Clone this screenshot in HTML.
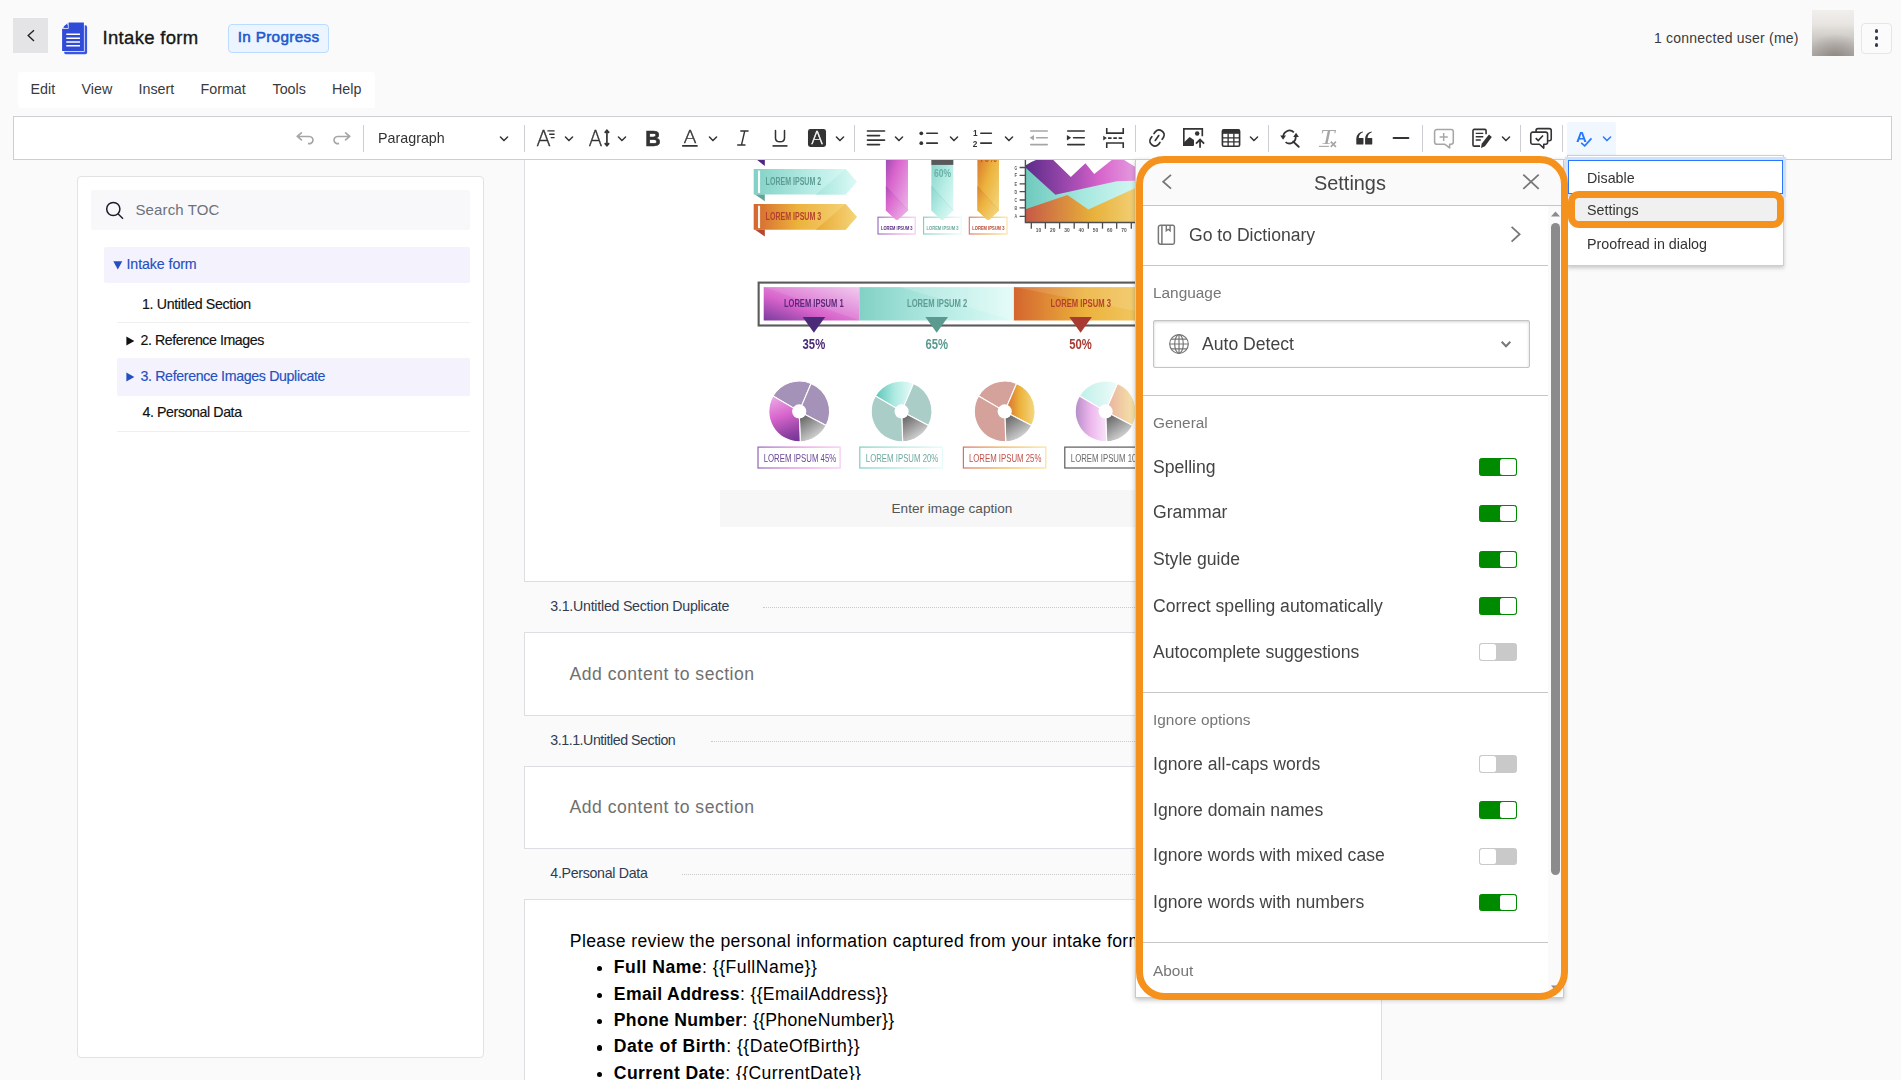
<!DOCTYPE html>
<html lang="en">
<head>
<meta charset="utf-8">
<title>Intake form</title>
<style>
*{box-sizing:border-box;margin:0;padding:0}
html,body{width:1901px;height:1080px;overflow:hidden;background:#fafafa;font-family:"Liberation Sans",sans-serif;color:#222}
.abs{position:absolute}
.gs{will-change:transform}
.t{position:absolute;white-space:pre;line-height:1}
svg{position:absolute;overflow:visible}
/* header */
#back{left:13px;top:18px;width:35px;height:35px;background:#e4e4e6}
#title{left:102.5px;top:28.5px;font-size:18.5px;font-weight:500;letter-spacing:.32px;color:#161616;-webkit-text-stroke:.35px #161616}
#badge{left:228px;top:24px;width:101px;height:29px;border:1px solid #b9dcff;border-radius:4px;background:#ecf5ff}
#badge span{left:8.7px;top:4px;font-size:15.3px;font-weight:normal;color:#1d59cf;letter-spacing:.32px;-webkit-text-stroke:.55px #1d59cf}
#users{left:1654px;top:30.5px;font-size:14px;letter-spacing:.22px;color:#3a3a3a}
#avatar{left:1812px;top:10px;width:42px;height:46px;background:radial-gradient(ellipse 75% 50% at 55% 102%,rgba(118,110,106,.6),rgba(118,110,106,0) 100%),linear-gradient(#f1efec 0%,#e8e5e2 30%,#cdc9c5 62%,#b3afab 100%)}
#kebab{left:1861px;top:23px;width:31px;height:31px;border:1px solid #e6e6e6;border-radius:4px;background:#fbfbfb}
#kebab i{position:absolute;left:12.6px;width:3.6px;height:3.8px;border-radius:50%;background:#353a50}
/* menubar */
#menubar{left:18px;top:72px;width:357px;height:36px;background:#fff;border-radius:3px}
#menubar span{top:10px;font-size:14.3px;color:#3a3a3a}
/* toolbar */
#toolbar{left:13px;top:116px;width:1879px;height:44px;background:#fff;border:1px solid #ccced1}
.sep{position:absolute;top:125px;width:1px;height:27px;background:#ccced1}
.ic{width:22px;height:22px;top:127px;will-change:transform}
.chev{width:10px;height:10px;top:134px}
/* toc */
#toc{left:77px;top:176px;width:406.5px;height:881.5px;background:#fff;border:1px solid #e2e2e2;border-radius:4px}
#search{left:91px;top:190px;width:379px;height:39.5px;background:#f8f8fa;border-radius:2px}
.tocrow{position:absolute;background:#f3f2fd;border-radius:2px}
.tocline{position:absolute;height:1px;background:#efefef;left:117px;width:353px}
.toct{font-size:14.2px;color:#111;-webkit-text-stroke:.15px currentColor}
.blue{color:#2450bf !important}
/* doc */
#doc{left:524px;top:159px;width:858px;height:940px;background:#fafafa}
.box{position:absolute;left:524px;width:858px;background:#fff;border:1px solid #dedee2}
.sech{font-size:14.2px;color:#313c52}
.dots{position:absolute;height:0;border-top:1px dotted #c9c9c9}
.ph{font-size:17.6px;color:#707070;letter-spacing:.5px}
.body{font-size:17.6px;color:#000}
/* panel */
#panel{left:1135px;top:159px;width:429px;height:838.500px;background:#fff;border:1px solid #c9c9c9;box-shadow:0 2px 5px rgba(0,0,0,.24)}
#phead{left:1136px;top:160px;width:427px;height:45.5px;background:#fafafa;border-bottom:1px solid #c6c6c6}
.pline{position:absolute;left:1136px;width:412px;height:1px;background:#c6c6c6}
.plabel{font-size:15.4px;color:#767676;will-change:transform}
.prow{font-size:17.6px;color:#444;will-change:transform}
.tg{position:absolute;left:1479px;width:38px;border-radius:2.5px}
.tg.on{background:#008a00;border:1px solid #008a00}
.tg.off{background:#c9c9c9;border:1px solid #c9c9c9}
.tg i{position:absolute;top:0;bottom:0;width:16px;background:#fff;border-radius:2.5px}
.tg.on i{right:0}
.tg.off i{left:0}
/* dropdown */
#dd{left:1567px;top:155px;width:217px;height:110.5px;background:#fff;border:1px solid #ccced1;box-shadow:0 2px 4px rgba(0,0,0,.2)}
.ddt{font-size:14.3px;color:#333;will-change:transform}
.orange{position:absolute;border:7px solid #f5921e}
</style>
</head>
<body>
<!-- header -->
<div id="back" class="abs"></div>
<svg style="left:24px;top:28px" width="14" height="15" viewBox="0 0 14 15"><path d="M10 2.300 4.200 7.600 10 12.900" fill="none" stroke="#222" stroke-width="1.400"/></svg>
<svg style="left:61px;top:22px" width="28" height="34" viewBox="0 0 28 34">
 <rect x="3.200" y="3.300" width="22.900" height="28.900" rx="1.600" fill="#3a55e0"/>
 <path d="M7.600 .600H22.900V29H1.100V6.800H7.600z" fill="#2f4bd8" stroke="#fff" stroke-width="1.500" paint-order="stroke"/>
 <path d="M1.900 5.400H6.400V1.200z" fill="#2f4bd8"/>
 <path d="M5.300 12.300H19M5.300 16.200H19M5.300 20H19M5.300 23.700H19" stroke="#fff" stroke-width="1.600"/>
</svg>
<div id="title" class="t">Intake form</div>
<div id="badge" class="abs"><span class="t">In Progress</span></div>
<div id="users" class="t">1 connected user (me)</div>
<div id="avatar" class="abs"></div>
<div id="kebab" class="abs"><i style="top:5.200px"></i><i style="top:12.100px"></i><i style="top:19.200px"></i></div>
<!-- menubar -->
<div id="menubar" class="abs">
 <span class="t" style="left:12.5px">Edit</span>
 <span class="t" style="left:63.5px">View</span>
 <span class="t" style="left:120.5px">Insert</span>
 <span class="t" style="left:182.5px">Format</span>
 <span class="t" style="left:254.5px">Tools</span>
 <span class="t" style="left:314px">Help</span>
</div>
<!-- document -->
<div id="doc" class="abs"></div>
<div class="box" style="top:150px;height:432px"></div>
<div class="abs" style="left:720px;top:490px;width:465px;height:37px;background:#f7f7f7"></div>
<div class="t" style="left:891.500px;top:501.500px;font-size:13.600px;color:#555">Enter image caption</div>
<svg id="info" style="left:740px;top:160px;will-change:transform" width="460" height="320" viewBox="740 160 460 320" font-family="Liberation Sans,sans-serif">
<defs>
<clipPath id="cl"><rect x="740" y="160" width="460" height="320"/></clipPath>
<linearGradient id="gP" x1="0" y1="1" x2="1" y2="0"><stop offset="0" stop-color="#7a3b9e"/><stop offset=".38" stop-color="#d762cb"/><stop offset="1" stop-color="#f0c6ee"/></linearGradient>
<linearGradient id="gPv" x1="0" y1="0" x2="1" y2="1"><stop offset="0" stop-color="#9a4bb0"/><stop offset=".3" stop-color="#d863cc"/><stop offset="1" stop-color="#efbdeb"/></linearGradient>
<linearGradient id="gT" x1="0" y1="0" x2="1" y2="0"><stop offset="0" stop-color="#82d1c6"/><stop offset=".55" stop-color="#b6ece4"/><stop offset="1" stop-color="#e0fbf8"/></linearGradient>
<linearGradient id="gT2" x1="0" y1="0" x2="1" y2="0"><stop offset="0" stop-color="#a5e5dc"/><stop offset="1" stop-color="#dcfaf6"/></linearGradient>
<linearGradient id="gTv" x1="0" y1="0" x2="1" y2="1"><stop offset="0" stop-color="#84d3c9"/><stop offset=".5" stop-color="#b5ece4"/><stop offset="1" stop-color="#e6fcfa"/></linearGradient>
<linearGradient id="gO" x1="0" y1="0" x2="1" y2="0"><stop offset="0" stop-color="#d4662f"/><stop offset=".42" stop-color="#ecb23c"/><stop offset="1" stop-color="#f5d982"/></linearGradient>
<linearGradient id="gO2" x1="0" y1="0" x2="1" y2="0"><stop offset="0" stop-color="#e9a833"/><stop offset="1" stop-color="#f5d57a"/></linearGradient>
<linearGradient id="gOc" gradientUnits="userSpaceOnUse" x1="1025" y1="0" x2="1142" y2="0"><stop offset="0" stop-color="#c65846"/><stop offset=".58" stop-color="#e8b13a"/><stop offset="1" stop-color="#f3d47e"/></linearGradient>
<linearGradient id="gOv" x1="0" y1="0" x2="1" y2="1"><stop offset="0" stop-color="#d8782f"/><stop offset=".4" stop-color="#ecb23c"/><stop offset="1" stop-color="#f6dc8c"/></linearGradient>
<linearGradient id="gG" x1=".1" y1="0" x2=".7" y2="1"><stop offset="0" stop-color="#555"/><stop offset="1" stop-color="#e6e6e6"/></linearGradient>
<linearGradient id="gAP" gradientUnits="userSpaceOnUse" x1="1025" y1="0" x2="1142" y2="0"><stop offset="0" stop-color="#5c2c89"/><stop offset=".45" stop-color="#ad4fb6"/><stop offset=".65" stop-color="#d866cc"/><stop offset="1" stop-color="#e6a6e3"/></linearGradient>
<linearGradient id="gAT" gradientUnits="userSpaceOnUse" x1="1025" y1="0" x2="1142" y2="0"><stop offset="0" stop-color="#6ec9bd"/><stop offset=".5" stop-color="#a6e8df"/><stop offset="1" stop-color="#d8f8f4"/></linearGradient>
<linearGradient id="gM" x1=".45" y1="0" x2=".7" y2="1"><stop offset="0" stop-color="#e9a0e2"/><stop offset=".4" stop-color="#d865cc"/><stop offset=".85" stop-color="#8a409f"/><stop offset="1" stop-color="#76389a"/></linearGradient>
<linearGradient id="gPie4L" x1="0" y1="0" x2="1" y2="0"><stop offset="0" stop-color="#b68cc6"/><stop offset=".5" stop-color="#eeb8ee"/><stop offset="1" stop-color="#f8e4f8"/></linearGradient>
<linearGradient id="gPie4R" x1="0" y1="0" x2="1" y2="0"><stop offset="0" stop-color="#e9b0a0"/><stop offset="1" stop-color="#f6e6a8"/></linearGradient>
<linearGradient id="gPie4T" x1="0" y1="0" x2="1" y2="0"><stop offset="0" stop-color="#bff0e9"/><stop offset="1" stop-color="#eefbf9"/></linearGradient>
<linearGradient id="gPie2T" x1="0" y1="0" x2="1" y2="0"><stop offset="0" stop-color="#5cc5b8"/><stop offset=".5" stop-color="#aeeae2"/><stop offset="1" stop-color="#e8fcfa"/></linearGradient>
<linearGradient id="gPie3R" x1="0" y1="0" x2="1" y2="0"><stop offset="0" stop-color="#d4662f"/><stop offset=".5" stop-color="#ecb23c"/><stop offset="1" stop-color="#f5d982"/></linearGradient>
<linearGradient id="bP" x1="0" y1="0" x2="1" y2="0"><stop offset="0" stop-color="#9264b8"/><stop offset=".5" stop-color="#e58fdc"/><stop offset="1" stop-color="#f6c6f2"/></linearGradient>
<linearGradient id="bT" x1="0" y1="0" x2="1" y2="0"><stop offset="0" stop-color="#79cdc2"/><stop offset="1" stop-color="#e4fbf8"/></linearGradient>
<linearGradient id="bO" x1="0" y1="0" x2="1" y2="0"><stop offset="0" stop-color="#d77062"/><stop offset=".5" stop-color="#eeb04a"/><stop offset="1" stop-color="#f9e29a"/></linearGradient>
</defs>
<g clip-path="url(#cl)">
<path d="M754.700 158 764.800 158 764.800 166z" fill="#4f2580"/>
<path d="M754.700 194.3H764.800V201.3z" fill="#5fa598"/>
<path d="M753.700 168.9H845.600L856.800 181.8 845.600 194.6H753.700z" fill="url(#gT)"/>
<path d="M815.700 194.6 845.600 168.9 856.800 181.8 845.600 194.6z" fill="url(#gT2)"/>
<rect x="758" y="170.6" width="2.100" height="22.300" fill="#fff" opacity=".92"/>
<text x="765.600" y="184.6" font-size="10.400" font-weight="bold" fill="#5e9c94" textLength="55.600" lengthAdjust="spacingAndGlyphs">LOREM IPSUM 2</text>
<path d="M754.700 229.5H764.800V236.5z" fill="#b4472f"/>
<path d="M753.700 204.1H845.600L856.800 216.9 845.600 229.8H753.700z" fill="url(#gO)"/>
<path d="M815.700 229.8 845.600 204.1 856.800 216.9 845.600 229.8z" fill="url(#gO2)"/>
<rect x="758" y="205.8" width="2.100" height="22.300" fill="#fff" opacity=".92"/>
<text x="765.600" y="219.8" font-size="10.400" font-weight="bold" fill="#b5412c" textLength="55.600" lengthAdjust="spacingAndGlyphs">LOREM IPSUM 3</text>
<rect x="878.0" y="217.200" width="37.2" height="16.800" fill="#fff" stroke="url(#bP)" stroke-width="1.100"/>
<path d="M885.9 158H908V210.600L898.2 219.400Q897.0 220.300 895.7 219.400L885.9 210.600z" fill="url(#gPv)"/>
<path d="M885.9 186.100 908 210.600 898.2 219.400Q897.0 220.300 895.7 219.400L885.9 210.600z" fill="url(#gPv)" opacity=".75"/>
<path d="M885.9 186.100 908 210.600" stroke="#000" stroke-opacity=".06" stroke-width="1" fill="none"/>
<text x="881.0" y="230.200" font-size="6" font-weight="bold" fill="#53277f" textLength="31.6" lengthAdjust="spacingAndGlyphs">LOREM IPSUM 3</text>
<rect x="923.6" y="217.200" width="37.5" height="16.800" fill="#fff" stroke="url(#bT)" stroke-width="1.100"/>
<path d="M931.4 158H953.3V210.600L943.6 219.400Q942.3 220.300 941.0 219.400L931.4 210.600z" fill="url(#gTv)"/>
<path d="M931.4 186.100 953.3 210.600 943.6 219.400Q942.3 220.300 941.0 219.400L931.4 210.600z" fill="url(#gTv)" opacity=".75"/>
<path d="M931.4 186.100 953.3 210.600" stroke="#000" stroke-opacity=".06" stroke-width="1" fill="none"/>
<text x="926.6" y="230.200" font-size="6" font-weight="bold" fill="#6aa79e" textLength="31.9" lengthAdjust="spacingAndGlyphs">LOREM IPSUM 3</text>
<rect x="969.3" y="217.200" width="37.7" height="16.800" fill="#fff" stroke="url(#bO)" stroke-width="1.100"/>
<path d="M977.4 158H999V210.600L989.5 219.400Q988.2 220.300 986.9 219.400L977.4 210.600z" fill="url(#gOv)"/>
<path d="M977.4 186.100 999 210.600 989.5 219.400Q988.2 220.300 986.9 219.400L977.4 210.600z" fill="url(#gOv)" opacity=".75"/>
<path d="M977.4 186.100 999 210.600" stroke="#000" stroke-opacity=".06" stroke-width="1" fill="none"/>
<text x="972.3" y="230.200" font-size="6" font-weight="bold" fill="#b8412e" textLength="32.1" lengthAdjust="spacingAndGlyphs">LOREM IPSUM 3</text>
<rect x="931.400" y="158" width="21.900" height="6.900" fill="#595959"/>
<text x="934" y="176.700" font-size="11.200" font-weight="bold" fill="#6bb1a6" textLength="17" lengthAdjust="spacingAndGlyphs">60%</text>
<text x="979.700" y="161.600" font-size="11.200" font-weight="bold" fill="#c0562f" textLength="17" lengthAdjust="spacingAndGlyphs">70%</text>
<path d="M1025.400 165.400Q1031 161.500 1037.500 159.500L1053.300 160 1070.800 177.100 1085.400 163.300 1094.200 174 1111.700 160 1124.200 160 1135 166.700 1160 180V200H1025.400z" fill="url(#gAP)"/>
<path d="M1025.400 167.500 1055.400 194.800 1116.700 181.300 1135 180.800 1200 180V223H1025.400z" fill="url(#gAT)"/>
<path d="M1025.400 209.200 1067.500 195 1088.300 209.600 1135 188.300 1200 160V223H1025.400z" fill="url(#gOc)"/>
<path d="M1025.400 158V222.500H1200" fill="none" stroke="#4e4e4e" stroke-width="1.400"/>
<path d="M1019.600 167.5h5.800M1019.600 175.4h5.800M1019.600 183.8h5.800M1019.600 191.7h5.800M1019.600 200.0h5.800M1019.600 207.9h5.800M1019.600 216.3h5.800" stroke="#4e4e4e" stroke-width="1.300"/>
<text x="1014.600" y="169.5" font-size="6" font-weight="bold" fill="#555" textLength="2.600" lengthAdjust="spacingAndGlyphs">G</text>
<text x="1014.600" y="177.4" font-size="6" font-weight="bold" fill="#555" textLength="2.600" lengthAdjust="spacingAndGlyphs">F</text>
<text x="1014.600" y="185.8" font-size="6" font-weight="bold" fill="#555" textLength="2.600" lengthAdjust="spacingAndGlyphs">E</text>
<text x="1014.600" y="193.7" font-size="6" font-weight="bold" fill="#555" textLength="2.600" lengthAdjust="spacingAndGlyphs">D</text>
<text x="1014.600" y="202.0" font-size="6" font-weight="bold" fill="#555" textLength="2.600" lengthAdjust="spacingAndGlyphs">C</text>
<text x="1014.600" y="209.9" font-size="6" font-weight="bold" fill="#555" textLength="2.600" lengthAdjust="spacingAndGlyphs">B</text>
<text x="1014.600" y="218.3" font-size="6" font-weight="bold" fill="#555" textLength="2.600" lengthAdjust="spacingAndGlyphs">A</text>
<path d="M1031.3 222.500v6.300M1045.4 222.500v6.300M1059.6 222.500v6.300M1074.2 222.500v6.300M1088.3 222.500v6.300M1102.5 222.500v6.300M1116.7 222.500v6.300M1131.3 222.500v6.300M1145.5 222.500v6.300" stroke="#4e4e4e" stroke-width="1.300"/>
<text x="1038.5" y="232.200" font-size="6" font-weight="bold" fill="#555" text-anchor="middle" textLength="5.400" lengthAdjust="spacingAndGlyphs">10</text>
<text x="1052.7" y="232.200" font-size="6" font-weight="bold" fill="#555" text-anchor="middle" textLength="5.400" lengthAdjust="spacingAndGlyphs">20</text>
<text x="1066.9" y="232.200" font-size="6" font-weight="bold" fill="#555" text-anchor="middle" textLength="5.400" lengthAdjust="spacingAndGlyphs">30</text>
<text x="1081.2" y="232.200" font-size="6" font-weight="bold" fill="#555" text-anchor="middle" textLength="5.400" lengthAdjust="spacingAndGlyphs">40</text>
<text x="1095.5" y="232.200" font-size="6" font-weight="bold" fill="#555" text-anchor="middle" textLength="5.400" lengthAdjust="spacingAndGlyphs">50</text>
<text x="1109.7" y="232.200" font-size="6" font-weight="bold" fill="#555" text-anchor="middle" textLength="5.400" lengthAdjust="spacingAndGlyphs">60</text>
<text x="1124" y="232.200" font-size="6" font-weight="bold" fill="#555" text-anchor="middle" textLength="5.400" lengthAdjust="spacingAndGlyphs">70</text>
<text x="1138.3" y="232.200" font-size="6" font-weight="bold" fill="#555" text-anchor="middle" textLength="5.400" lengthAdjust="spacingAndGlyphs">80</text>
<rect x="758.650" y="282.600" width="430" height="42.900" fill="#fff" stroke="#5a5a5a" stroke-width="2.100"/>
<rect x="763.700" y="287.100" width="95.800" height="33.400" fill="url(#gP)"/>
<path d="M763.700 287.100 859.400 320.500V287.100z" fill="#fff" opacity=".1"/>
<rect x="859.400" y="287.100" width="154.600" height="33.400" fill="url(#gT)"/>
<path d="M859.400 287.100H900L1013.900 320.500V287.100z" fill="#fff" opacity=".18"/>
<rect x="1013.900" y="287.100" width="170" height="33.400" fill="url(#gO)"/>
<path d="M1013.900 287.100 1184 320.500V287.100z" fill="#fff" opacity=".12"/>
<text x="783.9" y="307.100" font-size="11.400" font-weight="bold" fill="#5b2a7a" textLength="59.7" lengthAdjust="spacingAndGlyphs">LOREM IPSUM 1</text>
<text x="907" y="307.100" font-size="11.400" font-weight="bold" fill="#5e9c94" textLength="60.2" lengthAdjust="spacingAndGlyphs">LOREM IPSUM 2</text>
<text x="1050.6" y="307.100" font-size="11.400" font-weight="bold" fill="#b5412c" textLength="60.4" lengthAdjust="spacingAndGlyphs">LOREM IPSUM 3</text>
<path d="M802.6 317.100h22.600L813.9 332.700z" fill="#4b2a7a"/>
<text x="802.6" y="348.700" font-size="14.700" font-weight="bold" fill="#4b2a7a" textLength="22.600" lengthAdjust="spacingAndGlyphs">35%</text>
<path d="M925.4 317.100h22.600L936.7 332.700z" fill="#5a9a8f"/>
<text x="925.4" y="348.700" font-size="14.700" font-weight="bold" fill="#5a9a8f" textLength="22.600" lengthAdjust="spacingAndGlyphs">65%</text>
<path d="M1069.3 317.100h22.600L1080.6 332.700z" fill="#a83a32"/>
<text x="1069.3" y="348.700" font-size="14.700" font-weight="bold" fill="#a83a32" textLength="22.600" lengthAdjust="spacingAndGlyphs">50%</text>
<path d="M799.2 411.4L773.01 395.97A30.4 30.4 0 0 1 811.08 383.42z" fill="#a592b9" stroke="#fff" stroke-width="1.100" stroke-linejoin="round"/>
<path d="M799.2 411.4L811.08 383.42A30.4 30.4 0 0 1 826.17 425.44z" fill="#a592b9" stroke="#fff" stroke-width="1.100" stroke-linejoin="round"/>
<path d="M799.2 411.4L826.17 425.44A30.4 30.4 0 0 1 800.26 441.78z" fill="url(#gG)" stroke="#fff" stroke-width="1.100" stroke-linejoin="round"/>
<path d="M799.2 411.4L800.26 441.78A30.4 30.4 0 0 1 773.01 395.97z" fill="url(#gM)" stroke="#fff" stroke-width="1.100" stroke-linejoin="round"/>
<circle cx="799.2" cy="411.4" r="7.100" fill="#fff"/>
<path d="M901.6 411.4L875.41 395.97A30.4 30.4 0 0 1 913.48 383.42z" fill="url(#gPie2T)" stroke="#fff" stroke-width="1.100" stroke-linejoin="round"/>
<path d="M901.6 411.4L913.48 383.42A30.4 30.4 0 0 1 928.57 425.44z" fill="#abcdc7" stroke="#fff" stroke-width="1.100" stroke-linejoin="round"/>
<path d="M901.6 411.4L928.57 425.44A30.4 30.4 0 0 1 902.66 441.78z" fill="url(#gG)" stroke="#fff" stroke-width="1.100" stroke-linejoin="round"/>
<path d="M901.6 411.4L902.66 441.78A30.4 30.4 0 0 1 875.41 395.97z" fill="#abcdc7" stroke="#fff" stroke-width="1.100" stroke-linejoin="round"/>
<circle cx="901.6" cy="411.4" r="7.100" fill="#fff"/>
<path d="M1004.7 411.4L978.51 395.97A30.4 30.4 0 0 1 1016.58 383.42z" fill="#d5a19b" stroke="#fff" stroke-width="1.100" stroke-linejoin="round"/>
<path d="M1004.7 411.4L1016.58 383.42A30.4 30.4 0 0 1 1031.67 425.44z" fill="url(#gPie3R)" stroke="#fff" stroke-width="1.100" stroke-linejoin="round"/>
<path d="M1004.7 411.4L1031.67 425.44A30.4 30.4 0 0 1 1005.76 441.78z" fill="url(#gG)" stroke="#fff" stroke-width="1.100" stroke-linejoin="round"/>
<path d="M1004.7 411.4L1005.76 441.78A30.4 30.4 0 0 1 978.51 395.97z" fill="#d5a19b" stroke="#fff" stroke-width="1.100" stroke-linejoin="round"/>
<circle cx="1004.7" cy="411.4" r="7.100" fill="#fff"/>
<path d="M1105.6 411.4L1079.41 395.97A30.4 30.4 0 0 1 1117.48 383.42z" fill="url(#gPie4T)" stroke="#fff" stroke-width="1.100" stroke-linejoin="round"/>
<path d="M1105.6 411.4L1117.48 383.42A30.4 30.4 0 0 1 1132.57 425.44z" fill="url(#gPie4R)" stroke="#fff" stroke-width="1.100" stroke-linejoin="round"/>
<path d="M1105.6 411.4L1132.57 425.44A30.4 30.4 0 0 1 1106.66 441.78z" fill="url(#gG)" stroke="#fff" stroke-width="1.100" stroke-linejoin="round"/>
<path d="M1105.6 411.4L1106.66 441.78A30.4 30.4 0 0 1 1079.41 395.97z" fill="url(#gPie4L)" stroke="#fff" stroke-width="1.100" stroke-linejoin="round"/>
<circle cx="1105.6" cy="411.4" r="7.100" fill="#fff"/>
<rect x="758.0" y="447.100" width="82.1" height="20.900" fill="#fff" stroke="url(#bP)" stroke-width="1.200"/>
<text x="763.7" y="462.200" font-size="11.700" fill="#6a4797" textLength="72.500" lengthAdjust="spacingAndGlyphs">LOREM IPSUM 45%</text>
<rect x="859.8" y="447.100" width="82.6" height="20.900" fill="#fff" stroke="url(#bT)" stroke-width="1.200"/>
<text x="865.8" y="462.200" font-size="11.700" fill="#6fa9a0" textLength="72.500" lengthAdjust="spacingAndGlyphs">LOREM IPSUM 20%</text>
<rect x="963.4" y="447.100" width="82.4" height="20.900" fill="#fff" stroke="url(#bO)" stroke-width="1.200"/>
<text x="968.9" y="462.200" font-size="11.700" fill="#c0524a" textLength="72.500" lengthAdjust="spacingAndGlyphs">LOREM IPSUM 25%</text>
<rect x="1064.8" y="447.100" width="82.6" height="20.900" fill="#fff" stroke="#5a5a5a" stroke-width="1.200"/>
<text x="1070.8" y="462.200" font-size="11.700" fill="#6a6a6a" textLength="72.500" lengthAdjust="spacingAndGlyphs">LOREM IPSUM 10%</text>
</g></svg>

<div class="t sech" style="left:550.300px;top:598.700px;letter-spacing:-.24px">3.1.Untitled Section Duplicate</div>
<div class="dots" style="left:763px;top:607px;width:592px"></div>
<div class="box" style="top:632px;height:83.500px"></div>
<div class="t ph" style="left:569.500px;top:666px">Add content to section</div>
<div class="t sech" style="left:550.300px;top:732.700px;letter-spacing:-.45px">3.1.1.Untitled Section</div>
<div class="dots" style="left:711px;top:740.500px;width:644px"></div>
<div class="box" style="top:766px;height:82.500px"></div>
<div class="t ph" style="left:569.500px;top:799px">Add content to section</div>
<div class="t sech" style="left:550.300px;top:865.700px;letter-spacing:-.3px">4.Personal Data</div>
<div class="dots" style="left:682px;top:873.500px;width:673px"></div>
<div class="box" style="top:899px;height:200px"></div>
<div class="t body" style="left:569.800px;top:932.800px;letter-spacing:.38px">Please review the personal information captured from your intake form</div>
<div class="abs" style="left:596.700px;top:965.6px;width:5.700px;height:5.700px;border-radius:50%;background:#000"></div><div class="t body" style="left:613.800px;top:958.8px;letter-spacing:0.47px"><b>Full Name</b>: {{FullName}}</div>
<div class="abs" style="left:596.700px;top:992.8px;width:5.700px;height:5.700px;border-radius:50%;background:#000"></div><div class="t body" style="left:613.800px;top:986.0px;letter-spacing:0.35px"><b>Email Address</b>: {{EmailAddress}}</div>
<div class="abs" style="left:596.700px;top:1018.5px;width:5.700px;height:5.700px;border-radius:50%;background:#000"></div><div class="t body" style="left:613.800px;top:1011.7px;letter-spacing:0.3px"><b>Phone Number</b>: {{PhoneNumber}}</div>
<div class="abs" style="left:596.700px;top:1045.2px;width:5.700px;height:5.700px;border-radius:50%;background:#000"></div><div class="t body" style="left:613.800px;top:1038.4px;letter-spacing:0.52px"><b>Date of Birth</b>: {{DateOfBirth}}</div>
<div class="abs" style="left:596.700px;top:1071.5px;width:5.700px;height:5.700px;border-radius:50%;background:#000"></div><div class="t body" style="left:613.800px;top:1064.7px;letter-spacing:0.41px"><b>Current Date</b>: {{CurrentDate}}</div>
<!-- TOC -->
<div id="toc" class="abs"></div>
<div id="search" class="abs"></div>
<svg style="left:105px;top:201px" width="20" height="19" viewBox="0 0 20 19"><circle cx="8.300" cy="8" r="6.600" fill="none" stroke="#1a1f2b" stroke-width="1.500"/><path d="M13 12.800l5 4.900" stroke="#1a1f2b" stroke-width="1.500"/></svg>
<div class="t" style="left:135.500px;top:201.500px;font-size:15px;color:#6d717c;letter-spacing:.12px">Search TOC</div>
<div class="tocrow" style="left:104px;top:247px;width:366px;height:36px"></div>
<svg style="left:112.500px;top:260.500px" width="10" height="9" viewBox="0 0 10 9"><path d="M.3.300h9L4.800 8.400z" fill="#2450bf"/></svg>
<div class="t toct blue" style="left:126.500px;top:257.100px;letter-spacing:-.08px">Intake form</div>
<div class="t toct" style="left:142px;top:296.900px;letter-spacing:-.33px">1. Untitled Section</div>
<div class="tocline" style="top:322px"></div>
<svg style="left:125.500px;top:335.500px" width="9" height="10" viewBox="0 0 9 10"><path d="M.4.400v9L8.300 4.900z" fill="#111"/></svg>
<div class="t toct" style="left:140.500px;top:332.900px;letter-spacing:-.44px">2. Reference Images</div>
<div class="tocrow" style="left:117px;top:358px;width:353px;height:37.500px"></div>
<svg style="left:125.500px;top:371.500px" width="9" height="10" viewBox="0 0 9 10"><path d="M.4.400v9L8.300 4.900z" fill="#2450bf"/></svg>
<div class="t toct blue" style="left:140.500px;top:368.900px;letter-spacing:-.35px">3. Reference Images Duplicate</div>
<div class="t toct" style="left:142.500px;top:404.900px;letter-spacing:-.41px">4. Personal Data</div>
<div class="tocline" style="top:431px"></div>
<!-- toolbar -->
<div id="toolbar" class="abs"></div>
<svg class="ic" style="left:294px;top:127px" width="22" height="22" viewBox="0 0 20 20" ><path fill="#a6a6a6" d="m5.042 9.367 2.189 1.837a.75.75 0 0 1-.965 1.149l-3.788-3.18a.747.747 0 0 1-.21-.284.75.75 0 0 1 .17-.945L6.23 4.762a.75.75 0 1 1 .964 1.15L4.863 7.866h8.917A.75.75 0 0 1 14 7.9a4 4 0 1 1-1.477 7.718l.344-1.489a2.5 2.5 0 1 0 1.094-4.73l.008-.032H5.042z"/></svg>
<svg class="ic" style="left:330.5px;top:127px" width="22" height="22" viewBox="0 0 20 20" ><path fill="#a6a6a6" d="m14.958 9.367-2.189 1.837a.75.75 0 0 0 .965 1.149l3.788-3.18a.747.747 0 0 0 .21-.284.75.75 0 0 0-.17-.945L13.77 4.762a.75.75 0 1 0-.964 1.15l2.331 1.955H6.22A.75.75 0 0 0 6 7.9a4 4 0 1 0 1.477 7.718l-.344-1.489A2.5 2.5 0 1 1 6.039 9.4l-.008-.032h8.927z"/></svg>
<div class="sep" style="left:363px"></div>
<div class="t gs" style="left:378px;top:130.500px;font-size:14.300px;color:#333">Paragraph</div>
<svg class="chev" style="left:498.90px;top:133.300px" width="12" height="12" viewBox="0 0 10 10"><path fill="#333" d="M.941 4.523a.75.75 0 1 1 1.06-1.06l3.006 3.005 3.005-3.005a.75.75 0 1 1 1.06 1.06l-3.549 3.55a.75.75 0 0 1-1.168-.136L.941 4.523z"/></svg>
<div class="sep" style="left:524px"></div>
<svg class="ic" style="left:535px;top:127px" width="22" height="22" viewBox="0 0 20 20" ><text x="1.200" y="17.200" font-family="DejaVu Sans,sans-serif" font-weight="200" font-size="19.900" fill="#333" stroke="#333" stroke-width=".35" textLength="13.300" lengthAdjust="spacingAndGlyphs">A</text><path d="M11.300 3.550h6.500M12.900 6.650h4.900M14.300 9.650h3.500" stroke="#333" stroke-width="1.300" fill="none"/></svg>
<svg class="chev" style="left:563.90px;top:133.300px" width="12" height="12" viewBox="0 0 10 10"><path fill="#333" d="M.941 4.523a.75.75 0 1 1 1.06-1.06l3.006 3.005 3.005-3.005a.75.75 0 1 1 1.06 1.06l-3.549 3.55a.75.75 0 0 1-1.168-.136L.941 4.523z"/></svg>
<svg class="ic" style="left:588px;top:127px" width="22" height="22" viewBox="0 0 20 20" ><text x=".500" y="17.200" font-family="DejaVu Sans,sans-serif" font-weight="200" font-size="19.900" fill="#333" stroke="#333" stroke-width=".35" textLength="12.700" lengthAdjust="spacingAndGlyphs">A</text><path d="M17.200 3.300v13.400M15.200 5.300l2-2.300 2 2.300M15.200 14.700l2 2.300 2-2.300" stroke="#333" stroke-width="1.550" fill="none"/></svg>
<svg class="chev" style="left:616.90px;top:133.300px" width="12" height="12" viewBox="0 0 10 10"><path fill="#333" d="M.941 4.523a.75.75 0 1 1 1.06-1.06l3.006 3.005 3.005-3.005a.75.75 0 1 1 1.06 1.06l-3.549 3.55a.75.75 0 0 1-1.168-.136L.941 4.523z"/></svg>
<svg class="ic" style="left:642px;top:127px" width="22" height="22" viewBox="0 0 20 20" ><text x="2.900" y="16.900" font-family="Liberation Sans,sans-serif" font-weight="bold" font-size="19.400" fill="#333" stroke="#333" stroke-width=".5">B</text></svg>
<svg class="ic" style="left:679px;top:127px" width="22" height="22" viewBox="0 0 20 20" ><text x="4.200" y="14.900" font-family="DejaVu Sans,sans-serif" font-weight="200" font-size="16.700" fill="#333" stroke="#333" stroke-width=".4" textLength="12" lengthAdjust="spacingAndGlyphs">A</text><path d="M3.400 17.200h13" stroke="#333" stroke-width="1.500" stroke-linecap="round"/></svg>
<svg class="chev" style="left:707.90px;top:133.300px" width="12" height="12" viewBox="0 0 10 10"><path fill="#333" d="M.941 4.523a.75.75 0 1 1 1.06-1.06l3.006 3.005 3.005-3.005a.75.75 0 1 1 1.06 1.06l-3.549 3.55a.75.75 0 0 1-1.168-.136L.941 4.523z"/></svg>
<svg class="ic" style="left:731.5px;top:127px" width="22" height="22" viewBox="0 0 20 20" ><path d="M8 3.6h6.6M5.2 16.4h6.6M11.6 3.6 8.6 16.4" stroke="#333" stroke-width="1.3" stroke-linecap="round" fill="none"/></svg>
<svg class="ic" style="left:769px;top:127px" width="22" height="22" viewBox="0 0 20 20" ><path d="M5.9 3.3v6.6c0 2.3 1.5 3.5 4.1 3.5s4.1-1.200 4.1-3.500V3.3" stroke="#333" stroke-width="1.4" stroke-linecap="round" fill="none"/><path d="M3.2 17.2h13.6" stroke="#333" stroke-width="1.5"/></svg>
<svg class="ic" style="left:806px;top:127px" width="22" height="22" viewBox="0 0 20 20" ><rect x="1.800" y="1.900" width="16.400" height="16.200" rx="2.200" fill="#333"/><text x="4.500" y="15.700" font-family="DejaVu Sans,sans-serif" font-weight="200" font-size="15.400" fill="#fff" stroke="#fff" stroke-width=".35" textLength="11.100" lengthAdjust="spacingAndGlyphs">A</text></svg>
<svg class="chev" style="left:834.90px;top:133.300px" width="12" height="12" viewBox="0 0 10 10"><path fill="#333" d="M.941 4.523a.75.75 0 1 1 1.06-1.06l3.006 3.005 3.005-3.005a.75.75 0 1 1 1.06 1.06l-3.549 3.55a.75.75 0 0 1-1.168-.136L.941 4.523z"/></svg>
<div class="sep" style="left:854px"></div>
<svg class="ic" style="left:865px;top:127px" width="22" height="22" viewBox="0 0 20 20" ><path d="M2.200 3.700h15.600M2.200 7.800h11M2.200 11.900h15.600M2.200 16h11" stroke="#333" stroke-width="1.450" stroke-linecap="round"/></svg>
<svg class="chev" style="left:893.90px;top:133.300px" width="12" height="12" viewBox="0 0 10 10"><path fill="#333" d="M.941 4.523a.75.75 0 1 1 1.06-1.06l3.006 3.005 3.005-3.005a.75.75 0 1 1 1.06 1.06l-3.549 3.55a.75.75 0 0 1-1.168-.136L.941 4.523z"/></svg>
<svg class="ic" style="left:917.5px;top:127px" width="22" height="22" viewBox="0 0 20 20" ><circle cx="3" cy="5.700" r="1.700" fill="#333"/><circle cx="3" cy="14.700" r="1.700" fill="#333"/><path d="M8 5.700h9.600M8 14.700h9.600" stroke="#333" stroke-width="1.450" stroke-linecap="round"/></svg>
<svg class="chev" style="left:948.90px;top:133.300px" width="12" height="12" viewBox="0 0 10 10"><path fill="#333" d="M.941 4.523a.75.75 0 1 1 1.06-1.06l3.006 3.005 3.005-3.005a.75.75 0 1 1 1.06 1.06l-3.549 3.55a.75.75 0 0 1-1.168-.136L.941 4.523z"/></svg>
<svg class="ic" style="left:972px;top:127px" width="22" height="22" viewBox="0 0 20 20" ><text x="1" y="8.300" font-family="Liberation Sans,sans-serif" font-weight="bold" font-size="7.500" fill="#333">1</text><text x=".6" y="18.300" font-family="Liberation Sans,sans-serif" font-weight="bold" font-size="7.500" fill="#333">2</text><path d="M8 5.700h9.600M8 14.700h9.600" stroke="#333" stroke-width="1.450" stroke-linecap="round"/></svg>
<svg class="chev" style="left:1003.90px;top:133.300px" width="12" height="12" viewBox="0 0 10 10"><path fill="#333" d="M.941 4.523a.75.75 0 1 1 1.06-1.06l3.006 3.005 3.005-3.005a.75.75 0 1 1 1.06 1.06l-3.549 3.55a.75.75 0 0 1-1.168-.136L.941 4.523z"/></svg>
<svg class="ic" style="left:1028px;top:127px" width="22" height="22" viewBox="0 0 20 20" ><path d="M2.500 3.700h15M7.800 9.800h9.700M2.500 16h15" stroke="#a6a6a6" stroke-width="1.450" stroke-linecap="round"/><path d="M5.400 7.300v5l-3.900-2.500z" fill="#a6a6a6"/></svg>
<svg class="ic" style="left:1065px;top:127px" width="22" height="22" viewBox="0 0 20 20" ><path d="M2.500 3.700h15M7.800 9.800h9.700M2.500 16h15" stroke="#333" stroke-width="1.450" stroke-linecap="round"/><path d="M1.700 7.300v5l3.900-2.500z" fill="#333"/></svg>
<svg class="ic" style="left:1102.7px;top:127px" width="22" height="22" viewBox="0 0 20 20" ><path d="M3.400 1v4.600h15V1M3.400 19.200v-4.600h15v4.600" stroke="#333" stroke-width="1.450" fill="none"/><path d="M4.600 10.100h3.200M9.400 10.100h3.200M14.200 10.100h3.200" stroke="#333" stroke-width="1.500"/><path d="M.2 7.900v4.400l3.300-2.200z" fill="#333"/></svg>
<div class="sep" style="left:1135px"></div>
<svg class="ic" style="left:1146px;top:127px" width="22" height="22" viewBox="0 0 20 20" ><path fill="#333" d="m11.077 15 .991-1.416a.75.75 0 1 1 1.229.86l-1.148 1.64a.748.748 0 0 1-.217.206 5.251 5.251 0 0 1-8.503-5.955.741.741 0 0 1 .12-.274l1.147-1.639a.75.75 0 1 1 1.228.86L4.933 10.700l.006.003a3.750 3.750 0 0 0 6.132 4.294l.006.004zm5.494-5.335a.748.748 0 0 1-.12.274l-1.147 1.639a.750.750 0 1 1-1.228-.860l.860-1.230a3.750 3.750 0 0 0-6.144-4.301l-.860 1.229a.750.750 0 0 1-1.229-.860l1.148-1.640a.748.748 0 0 1 .217-.206 5.251 5.251 0 0 1 8.503 5.955zm-4.563-2.532a.750.750 0 0 1 .184 1.045l-3.155 4.505a.750.750 0 1 1-1.229-.860l3.155-4.506a.750.750 0 0 1 1.045-.184z"/></svg>
<svg class="ic" style="left:1183px;top:127px" width="22" height="22" viewBox="0 0 20 20" ><path d="M9.700 16.600H.750V1.650h16.800V8.300" stroke="#333" stroke-width="1.500" fill="none"/><path d="M.750 16.600V14L6 9.100l4 2.700v4.800z" fill="#333"/><circle cx="12.900" cy="6" r="2.050" fill="#333"/><path d="M15.500 18.900V11.700M11.800 15.100l3.700-3.700 3.700 3.700" stroke="#333" stroke-width="1.600" fill="none"/></svg>
<svg class="ic" style="left:1220px;top:127px" width="22" height="22" viewBox="0 0 20 20" ><rect x="2.200" y="2.600" width="15.600" height="14.900" rx="1.200" fill="none" stroke="#333" stroke-width="1.500"/><rect x="2.200" y="2.600" width="15.600" height="3.600" fill="#333"/><path d="M2.200 9.900h15.600M2.200 13.600h15.600M7.400 6v11.500M12.600 6v11.500" stroke="#333" stroke-width="1.200"/></svg>
<svg class="chev" style="left:1248.90px;top:133.300px" width="12" height="12" viewBox="0 0 10 10"><path fill="#333" d="M.941 4.523a.75.75 0 1 1 1.06-1.06l3.006 3.005 3.005-3.005a.75.75 0 1 1 1.06 1.06l-3.549 3.55a.75.75 0 0 1-1.168-.136L.941 4.523z"/></svg>
<div class="sep" style="left:1268px"></div>
<svg class="ic" style="left:1279px;top:127px" width="22" height="22" viewBox="0 0 20 20" ><path d="M3.900 9.400A5.700 5.700 0 0 1 13.500 4.800M15.200 8.900A5.700 5.700 0 0 1 6 13.700" stroke="#333" stroke-width="1.600" fill="none"/><path d="M1.100 7.800h5.300L3.700 11.500zM12.900 9.200h5.200L15.500 5.300z" fill="#333"/><path d="M12.900 13.300l5 4.700" stroke="#333" stroke-width="1.800" stroke-linecap="round"/></svg>
<svg class="ic" style="left:1317px;top:127px" width="22" height="22" viewBox="0 0 20 20" ><text x="2.700" y="15.600" font-family="Liberation Serif,serif" font-style="italic" font-size="18.500" fill="#a6a6a6" textLength="13.200" lengthAdjust="spacingAndGlyphs">T</text><path d="M1.800 17.600h9" stroke="#a6a6a6" stroke-width="1"/><path d="M12.500 13.300l4.700 4.700M17.200 13.300l-4.700 4.700" stroke="#a6a6a6" stroke-width="1.500"/></svg>
<svg class="ic" style="left:1353px;top:127px" width="22" height="22" viewBox="0 0 20 20" ><path fill="#333" d="M3 10.423a6.500 6.500 0 0 1 6.056-6.408l.038.670C6.448 5.423 5.354 7.663 5.220 10H9c.552 0 .500.432.500.986v4.511c0 .554-.448.503-1 .503h-5c-.552 0-.500-.449-.500-1.003v-4.574zm8 0a6.500 6.500 0 0 1 6.056-6.408l.038.670c-2.646.739-3.740 2.979-3.873 5.315H17c.552 0 .500.432.500.986v4.511c0 .554-.448.503-1 .503h-5c-.552 0-.500-.449-.500-1.003v-4.574z"/></svg>
<svg class="ic" style="left:1390px;top:127px" width="22" height="22" viewBox="0 0 20 20" ><path d="M3.300 10h13.400" stroke="#333" stroke-width="1.900" stroke-linecap="round"/></svg>
<div class="sep" style="left:1422px"></div>
<svg class="ic" style="left:1433px;top:127px" width="22" height="22" viewBox="0 0 20 20" ><path d="M3.450 2.350h13a2 2 0 0 1 2 2v9.350a2 2 0 0 1-2 2h-1.300v3.300l-4.300-3.300H3.450a2 2 0 0 1-2-2V4.350a2 2 0 0 1 2-2z" fill="none" stroke="#a6a6a6" stroke-width="1.400" stroke-linejoin="round"/><path d="M9.700 5.400v7.400M6 9.100h7.400" stroke="#a6a6a6" stroke-width="1.300"/></svg>
<svg class="ic" style="left:1471px;top:127px" width="22" height="22" viewBox="0 0 20 20" ><path d="M13.700 6.500V3.300a1.100 1.100 0 0 0-1.100-1.100H2.900a1.100 1.100 0 0 0-1.100 1.100v13a1.100 1.100 0 0 0 1.100 1.100h5.300" fill="none" stroke="#333" stroke-width="1.450"/><path d="M4.300 5.800h6.900M4.300 8.800h6.900M4.300 11.800h4.600" stroke="#333" stroke-width="1.300"/><path d="M16.300 6.900l2.600 2.100-6.200 8.400-3.600 1.700.600-3.900z" fill="#333"/></svg>
<svg class="chev" style="left:1500.90px;top:133.300px" width="12" height="12" viewBox="0 0 10 10"><path fill="#333" d="M.941 4.523a.75.75 0 1 1 1.06-1.06l3.006 3.005 3.005-3.005a.75.75 0 1 1 1.06 1.06l-3.549 3.55a.75.75 0 0 1-1.168-.136L.941 4.523z"/></svg>
<div class="sep" style="left:1520px"></div>
<svg class="ic" style="left:1530px;top:127px" width="22" height="22" viewBox="0 0 20 20" ><path d="M5.500 4.700V3.300a1.800 1.800 0 0 1 1.800-1.800h10.200a1.800 1.800 0 0 1 1.800 1.800v7.400a1.800 1.800 0 0 1-1.800 1.800h-1" fill="none" stroke="#333" stroke-width="1.450"/><path d="M2.500 4.700h11.700a1.800 1.800 0 0 1 1.800 1.800v7.400a1.800 1.800 0 0 1-1.800 1.800h-1.700v3.500l-3.900-3.500H2.500a1.800 1.800 0 0 1-1.800-1.800V6.500a1.800 1.800 0 0 1 1.800-1.800z" fill="#fff" stroke="#333" stroke-width="1.450" stroke-linejoin="round"/><path d="M5.200 10.100l2.300 2.300 4.300-4.600" fill="none" stroke="#333" stroke-width="1.450"/></svg>
<div class="sep" style="left:1562px"></div>
<div class="abs" style="left:1567px;top:122px;width:49px;height:33px;background:#f0f7ff;border-radius:2px 2px 0 0"></div>
<svg class="ic" style="left:1573px;top:127px" width="22" height="22" viewBox="0 0 20 20" ><text x="2.800" y="13.200" font-family="Liberation Sans,sans-serif" font-weight="bold" font-size="13.600" fill="#2977ff" textLength="9.900" lengthAdjust="spacingAndGlyphs">A</text><path d="M7.450 14.400l3.250 2.800 6.100-6.900" fill="none" stroke="#2977ff" stroke-width="1.500"/></svg>
<svg class="chev" style="left:1601.90px;top:133.300px" width="12" height="12" viewBox="0 0 10 10"><path fill="#2977ff" d="M.941 4.523a.75.75 0 1 1 1.06-1.06l3.006 3.005 3.005-3.005a.75.75 0 1 1 1.06 1.06l-3.549 3.55a.75.75 0 0 1-1.168-.136L.941 4.523z"/></svg>
<!-- settings panel -->
<div id="panel" class="abs"></div>
<div id="phead" class="abs"></div>
<svg style="left:1160px;top:172px" width="14" height="20" viewBox="0 0 14 20"><path d="M11 2.800 3.200 9.700 11 16.600" fill="none" stroke="#777" stroke-width="1.800"/></svg>
<svg style="left:1521px;top:172px" width="20" height="20" viewBox="0 0 20 20"><path d="M2.300 2.600l15.400 14.200M17.700 2.600 2.300 16.800" fill="none" stroke="#777" stroke-width="1.800"/></svg>
<div class="t gs" style="left:1313.500px;top:174px;font-size:19.900px;color:#444">Settings</div>
<div class="abs" style="left:1548px;top:206px;width:15px;height:790px;background:#fafafa"></div>
<svg style="left:1551px;top:210.500px" width="9" height="6" viewBox="0 0 9 6"><path d="M0 5.500 4.500.500 9 5.500z" fill="#8b8b8b"/></svg>
<div class="abs" style="left:1551px;top:222.500px;width:8.700px;height:652.400px;background:#8b8b8b;border-radius:4.500px"></div>
<svg style="left:1551px;top:985px" width="9" height="6" viewBox="0 0 9 6"><path d="M0 .500 4.500 5.500 9 .500z" fill="#8b8b8b"/></svg>
<svg style="left:1157px;top:224px" width="19" height="22" viewBox="0 0 19 22"><path d="M3.600 1.200h12.200a1.600 1.600 0 0 1 1.600 1.600v15.800a1.600 1.600 0 0 1-1.600 1.600H3.600a2.200 2.200 0 0 1-2.200-2.200V3.400a2.200 2.200 0 0 1 2.200-2.200z" fill="none" stroke="#777" stroke-width="1.500"/><path d="M4.900 1.200v19" stroke="#777" stroke-width="1.500"/><path d="M9.300 1.500v5.300l1.900-1.500 1.900 1.500V1.500" fill="none" stroke="#777" stroke-width="1.400"/></svg>
<div class="t prow" style="left:1189px;top:227.100px">Go to Dictionary</div>
<svg style="left:1509px;top:225px" width="14" height="18" viewBox="0 0 14 18"><path d="M2.600 1.800 10.600 9.200 2.600 16.600" fill="none" stroke="#777" stroke-width="1.800"/></svg>
<div class="pline" style="top:265px"></div>
<div class="t plabel" style="left:1153px;top:285px">Language</div>
<div class="abs" style="left:1153px;top:320px;width:377px;height:48px;background:#fff;border:1px solid #c4c4c4;border-radius:2px;box-shadow:inset 0 1px 3px rgba(0,0,0,.18)"></div>
<svg style="left:1168px;top:333px" width="22" height="22" viewBox="0 0 22 22"><g fill="none" stroke="#777" stroke-width="1.200"><circle cx="11" cy="11" r="9.300"/><ellipse cx="11" cy="11" rx="4.300" ry="9.300"/><path d="M11 1.700v18.600M1.700 11h18.600M3.100 6.200h15.800M3.100 15.800h15.800"/></g></svg>
<div class="t prow" style="left:1202px;top:336.100px">Auto Detect</div>
<svg style="left:1499.500px;top:340px" width="12" height="9" viewBox="0 0 12 9"><path d="M1.700 1.800 6 6.200l4.300-4.400" fill="none" stroke="#777" stroke-width="2"/></svg>
<div class="pline" style="top:395px"></div>
<div class="t plabel" style="left:1153px;top:415px">General</div>
<div class="t prow" style="left:1153px;top:459.1px">Spelling</div>
<div class="tg on" style="top:458px;height:18px"><i></i></div>
<div class="t prow" style="left:1153px;top:504.1px">Grammar</div>
<div class="tg on" style="top:505px;height:17px"><i></i></div>
<div class="t prow" style="left:1153px;top:551.1px">Style guide</div>
<div class="tg on" style="top:551px;height:17px"><i></i></div>
<div class="t prow" style="left:1153px;top:598.1px">Correct spelling automatically</div>
<div class="tg on" style="top:597px;height:18px"><i></i></div>
<div class="t prow" style="left:1153px;top:644.1px">Autocomplete suggestions</div>
<div class="tg off" style="top:643px;height:18px"><i></i></div>
<div class="pline" style="top:692px"></div>
<div class="t plabel" style="left:1153px;top:712px">Ignore options</div>
<div class="t prow" style="left:1153px;top:756.1px">Ignore all-caps words</div>
<div class="tg off" style="top:755px;height:18px"><i></i></div>
<div class="t prow" style="left:1153px;top:802.1px">Ignore domain names</div>
<div class="tg on" style="top:801px;height:18px"><i></i></div>
<div class="t prow" style="left:1153px;top:847.1px">Ignore words with mixed case</div>
<div class="tg off" style="top:848px;height:17px"><i></i></div>
<div class="t prow" style="left:1153px;top:894.1px">Ignore words with numbers</div>
<div class="tg on" style="top:894px;height:17px"><i></i></div>
<div class="pline" style="top:942px"></div>
<div class="t plabel" style="left:1153px;top:963px">About</div>
<!-- dropdown -->
<div id="dd" class="abs"></div>
<div class="abs" style="left:1568px;top:160px;width:215px;height:33.500px;background:#fff;border:1px solid #2977ff;box-shadow:0 0 0 3px #cfe1ff"></div>
<div class="t ddt" style="left:1586.500px;top:170.700px">Disable</div>
<div class="abs" style="left:1572px;top:195px;width:208px;height:29px;background:#f0f0f0;border-radius:4px"></div>
<div class="t ddt" style="left:1586.500px;top:202.500px">Settings</div>
<div class="t ddt" style="left:1586.500px;top:236.700px">Proofread in dialog</div>
<div class="orange" style="left:1136px;top:156px;width:432px;height:844px;border-radius:28px"></div>
<div class="orange" style="left:1568px;top:191px;width:216px;height:37px;border-radius:11px"></div>
</body>
</html>
